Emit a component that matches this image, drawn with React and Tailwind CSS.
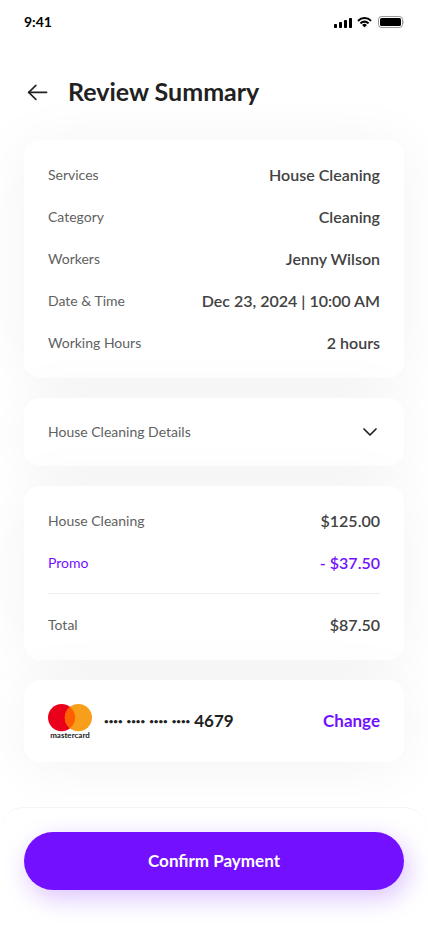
const booking = [
  { label: 'Services', value: 'House Cleaning' },
  { label: 'Category', value: 'Cleaning' },
  { label: 'Workers', value: 'Jenny Wilson' },
  { label: 'Date & Time', value: 'Dec 23, 2024 | 10:00 AM' },
  { label: 'Working Hours', value: '2 hours' },
]

function StatusBar() {
  return (
    <div className="flex items-center justify-between h-11 px-6 text-black">
      <span className="text-sm font-bold">9:41</span>
      <svg className="w-[70px] h-3" viewBox="0 0 70 12" fill="currentColor" aria-hidden="true">
        <rect x="0" y="8" width="3" height="4" rx="0.8" />
        <rect x="5" y="6" width="3" height="6" rx="0.8" />
        <rect x="10" y="4" width="3" height="8" rx="0.8" />
        <rect x="15" y="2" width="3" height="10" rx="0.8" />
        <path d="M30.500 3.100c2.100 0 4.100.8 5.600 2.300.1.1.3.1.4 0l1.100-1.100c.1-.1.1-.3 0-.4a10.300 10.300 0 0 0-14.200 0c-.1.1-.1.3 0 .4l1.100 1.100c.1.1.3.1.4 0A8.100 8.100 0 0 1 30.500 3.100z" />
        <path d="M30.500 6.700c1.200 0 2.300.4 3.100 1.200.1.1.3.1.4 0l1.100-1.100c.1-.1.1-.3 0-.4a6.700 6.700 0 0 0-9.200 0c-.1.1-.1.3 0 .4l1.100 1.100c.1.1.3.1.4 0A4.600 4.600 0 0 1 30.500 6.700z" />
        <path d="M32.700 9.200c.1-.1.1-.3 0-.4a3.400 3.400 0 0 0-4.400 0c-.1.1-.1.3 0 .4l2 2c.1.1.3.1.4 0z" />
        <rect x="44.500" y="0.500" width="24" height="11" rx="3" fill="none" stroke="currentColor" opacity="0.4" />
        <rect x="46" y="2" width="21" height="8" rx="1.500" />
        <path d="M69.500 4v4c.5-.3 1-1.100 1-2s-.5-1.700-1-2z" opacity="0.4" />
      </svg>
    </div>
  )
}

function Card({ children, className = '' }) {
  return (
    <section className={`rounded-2xl bg-white p-6 shadow-[0_4px_60px_rgba(4,6,15,0.05)] ${className}`}>
      {children}
    </section>
  )
}

function Row({ label, value, accent = false }) {
  return (
    <div className="flex items-center justify-between h-[22px]">
      <dt className={accent ? 'text-sm text-[#7210ff]' : 'text-sm text-[#616161]'}>{label}</dt>
      <dd className={accent ? 'text-base font-semibold text-[#7210ff]' : 'text-base font-semibold text-[#424242]'}>{value}</dd>
    </div>
  )
}

function Mastercard() {
  return (
    <svg className="w-11 h-[34px]" viewBox="0 0 44 34" overflow="visible" role="img" aria-label="mastercard">
      <circle cx="13.600" cy="13.600" r="13.600" fill="#eb001b" />
      <circle cx="30.400" cy="13.600" r="13.600" fill="#f79e1b" />
      <path d="M22 2.900a13.600 13.600 0 0 1 0 21.400a13.600 13.600 0 0 1 0-21.400z" fill="#ff5f00" />
      <text x="22" y="34" textAnchor="middle" fontSize="8" fontWeight="700" fill="#212121">mastercard</text>
    </svg>
  )
}

export default function App() {
  return (
    <div className="flex flex-col min-h-screen bg-white font-['Lato',sans-serif] text-[#212121]">
      <StatusBar />

      <header className="flex items-center gap-4 h-12 mt-6 px-6">
        <button type="button" aria-label="Back" className="flex items-center justify-center w-7 h-7">
          <svg className="w-7 h-7" viewBox="0 0 28 28" fill="none" stroke="currentColor" strokeWidth="1.600" strokeLinecap="round" strokeLinejoin="round">
            <path d="M22.600 14.400H4.600" />
            <path d="M11.900 7.400l-7.200 7l7.200 7" />
          </svg>
        </button>
        <h1 className="text-[25px] font-bold">Review Summary</h1>
      </header>

      <main className="flex flex-col gap-5 px-6 pt-6 pb-11">
        <Card>
          <dl className="flex flex-col gap-5">
            {booking.map((item) => (
              <Row key={item.label} label={item.label} value={item.value} />
            ))}
          </dl>
        </Card>

        <Card>
          <button type="button" aria-expanded="false" className="flex items-center justify-between w-full h-5 text-sm text-[#616161]">
            House Cleaning Details
            <svg className="w-5 h-5 text-[#212121]" viewBox="0 0 20 20" fill="none" stroke="currentColor" strokeWidth="1.700" strokeLinecap="round" strokeLinejoin="round">
              <path d="M4 7l6 6l6-6" />
            </svg>
          </button>
        </Card>

        <Card>
          <dl className="flex flex-col gap-5">
            <Row label="House Cleaning" value="$125.00" />
            <Row label="Promo" value="- $37.50" accent />
            <div className="-mt-px border-t border-[#eeeeee] pt-5">
              <Row label="Total" value="$87.50" />
            </div>
          </dl>
        </Card>

        <Card className="flex items-center justify-between">
          <div className="flex items-center gap-3 h-[34px]">
            <Mastercard />
            <p className="flex items-center gap-1 text-[17px] font-bold">
              <span className="flex gap-1 text-[8px]">
                <span>••••</span>
                <span>••••</span>
                <span>••••</span>
                <span>••••</span>
              </span>
              4679
            </p>
          </div>
          <button type="button" className="text-[17px] font-bold text-[#7210ff]">Change</button>
        </Card>
      </main>

      <footer className="mt-auto rounded-t-3xl border-t border-[#f5f5f5] bg-white px-6 pt-6 pb-9">
        <button type="button" className="w-full h-[58px] rounded-full bg-[#7210ff] text-[17px] font-bold text-white shadow-[4px_8px_24px_rgba(114,16,255,0.25)]">
          Confirm Payment
        </button>
      </footer>
    </div>
  )
}
